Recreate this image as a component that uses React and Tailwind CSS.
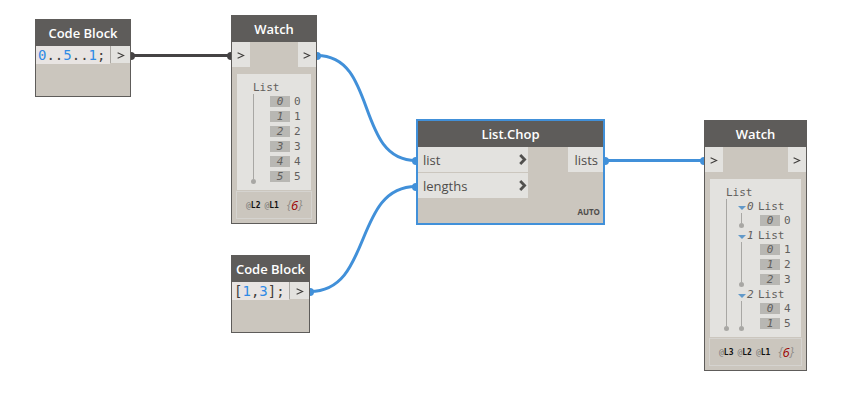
const MONO = "font-['DejaVu_Sans_Mono','Liberation_Mono',monospace]";

function Node({ title, className, children }) {
  return (
    <section className={`absolute flex flex-col border bg-[#cbc6be] ${className}`}>
      <h2 className="flex h-[26px] shrink-0 items-center justify-center bg-[#5e5c5a] pt-px text-[13px] font-semibold whitespace-nowrap text-white">
        {title}
      </h2>
      {children}
    </section>
  );
}

function Chevron() {
  return (
    <svg width="8" height="7" viewBox="0 0 8 7" fill="none" stroke="#3f3d3b" strokeWidth="1.1" aria-hidden="true">
      <path d="M0.6 0.7 L6.6 3.5 L0.6 6.3" />
    </svg>
  );
}

function Port({ label }) {
  return (
    <button type="button" aria-label={label} className="flex h-[25px] w-[18px] items-center justify-center bg-[#e3e2df] pt-px">
      <Chevron />
    </button>
  );
}

function CodeBlock({ className, tokens }) {
  return (
    <Node title="Code Block" className={`h-[78px] border-[#5e5c5a] ${className}`}>
      <div className="flex items-start">
        <code className={`flex h-[18px] min-w-0 grow items-center bg-[#e8e4e2] pl-[2px] text-[14px] leading-[18px] whitespace-pre ${MONO}`}>
          {tokens.map((t, i) => (
            <span key={i} className={/\d/.test(t) ? "text-[#2f8ae5]" : "text-[#3f3d3b]"}>{t}</span>
          ))}
        </code>
        <button type="button" aria-label="Output" className="flex h-[17px] w-5 shrink-0 items-center justify-center border-l border-[#aaa7a2] bg-[#e3e2df] pt-px pl-px">
          <Chevron />
        </button>
      </div>
    </Node>
  );
}

function Rail() {
  return (
    <div className="flex w-[5px] shrink-0 flex-col items-center" aria-hidden="true">
      <div className="w-px grow bg-[#a8a7a4]" />
      <div className="size-[5px] shrink-0 rounded-full bg-[#a8a7a4]" />
    </div>
  );
}

function Item({ index, value }) {
  return (
    <li className="flex h-[15px] items-center gap-1">
      <span className="flex h-[11px] w-5 items-center justify-center bg-[#b8b7b3] italic">{index}</span>
      <span>{value}</span>
    </li>
  );
}

function Group({ index, items }) {
  return (
    <li>
      <div className="flex h-[14px] items-center pt-[2px]">
        <button type="button" aria-label={`Collapse list ${index}`} className="mr-px pt-[2px]">
          <svg width="8" height="4" viewBox="0 0 8 4" className="block">
            <path d="M0 0H8L4 4Z" fill="#6299c9" />
          </svg>
        </button>
        <span className="w-[11px] italic">{index}</span>
        <span>List</span>
      </div>
      <div className="flex gap-4 pl-px">
        <Rail />
        <ul>
          {items.map((v, i) => <Item key={i} index={i} value={v} />)}
        </ul>
      </div>
    </li>
  );
}

function Watch({ className, levels, children }) {
  return (
    <Node title="Watch" className={`border-[#5e5c5a] pb-1 ${className}`}>
      <div className="flex justify-between">
        <Port label="Input" />
        <Port label="Output" />
      </div>
      <div className={`mx-[5px] mt-[7px] bg-[#e3e2df] pt-[6px] text-[11px] leading-[14px] text-[#62605d] ${MONO}`}>
        <p className="h-[14px] pt-px pl-4">List</p>
        {children}
      </div>
      <div className={`mx-1 mt-px flex h-7 items-center gap-[8px] border border-[#d5d3cf] pl-[9px] text-[8px] ${MONO}`}>
        <div className="flex gap-1 pt-px">
          {levels.map((l) => (
            <span key={l} className="font-bold text-[#111]">
              <span className="font-normal text-[#777]">@</span>{l}
            </span>
          ))}
        </div>
        <span className="flex items-center font-['Open_Sans',sans-serif] text-[12px] leading-[16px] text-[#8f8c88] italic">
          {"{"}<span className="text-[13px] font-medium text-[#9c0000]">6</span>{"}"}
        </span>
      </div>
    </Node>
  );
}

function InputPort({ name }) {
  return (
    <div className="flex h-[25px] items-center justify-between bg-[#e3e2df] pr-px pl-[5px]">
      <span className="pt-[2px]">{name}</span>
      <button type="button" aria-label={`Options for ${name}`}>
        <svg width="8" height="11" viewBox="0 0 8 11" fill="none" stroke="#51504e" strokeWidth="2.8" className="block">
          <path d="M1.2 1 L5.6 5.5 L1.2 10" />
        </svg>
      </button>
    </div>
  );
}

export default function App() {
  return (
    <main className="relative min-h-screen w-full overflow-hidden bg-white font-['Open_Sans','Noto_Sans',sans-serif]">
      <svg className="absolute top-0 left-0 h-full w-full" fill="none" strokeWidth="3" aria-hidden="true">
        <g stroke="#454344">
          <path d="M131 55.5H231" />
          <g fill="#454344" stroke="none">
            <circle cx="131" cy="56" r="4" />
            <circle cx="231" cy="56" r="4" />
          </g>
        </g>
        <g stroke="#4190d9">
          <path d="M317 55.5C378 55.5 355 160.5 416 160.5" />
          <path d="M310 291.5C373 291.5 353 186.5 416 186.5" />
          <path d="M605 160.5H704" />
          <g fill="#4190d9" stroke="none">
            <circle cx="317" cy="56" r="4" />
            <circle cx="310" cy="292" r="4" />
            <circle cx="416" cy="161" r="4" />
            <circle cx="416" cy="187" r="4" />
            <circle cx="605" cy="161" r="4" />
            <circle cx="704" cy="161" r="4" />
          </g>
        </g>
      </svg>

      <CodeBlock className="top-[19px] left-[35px] w-24" tokens={["0", "..", "5", "..", "1", ";"]} />
      <CodeBlock className="top-[255px] left-[231px] w-[79px]" tokens={["[", "1", ",", "3", "];"]} />

      <Watch className="top-[15px] left-[231px] w-[86px]" levels={["L2", "L1"]}>
        <div className="flex gap-[14px] pb-[6px] pl-[14px]">
          <Rail />
          <ul>
            {[0, 1, 2, 3, 4, 5].map((v) => <Item key={v} index={v} value={v} />)}
          </ul>
        </div>
      </Watch>

      <Node title="List.Chop" className="top-[119px] left-[416px] h-[106px] w-[189px] border-2 border-[#4190d9]">
        <div className="flex items-start justify-between text-[13px] text-[#4f4d4b]">
          <div className="flex w-[110px] flex-col gap-px">
            <InputPort name="list" />
            <InputPort name="lengths" />
          </div>
          <div className="flex h-[25px] w-[35px] items-center justify-end bg-[#e3e2df] pt-[2px] pr-[5px]">lists</div>
        </div>
        <span className="mt-auto mr-[3px] mb-[5px] self-end text-[8px] leading-[12px] font-bold text-[#4f4d4b]">AUTO</span>
      </Node>

      <Watch className="top-[120px] left-[704px] w-[103px]" levels={["L3", "L2", "L1"]}>
        <div className="flex gap-[9px] pb-[6px] pl-[14px]">
          <Rail />
          <ul>
            <Group index={0} items={[0]} />
            <Group index={1} items={[1, 2, 3]} />
            <Group index={2} items={[4, 5]} />
          </ul>
        </div>
      </Watch>
    </main>
  );
}
